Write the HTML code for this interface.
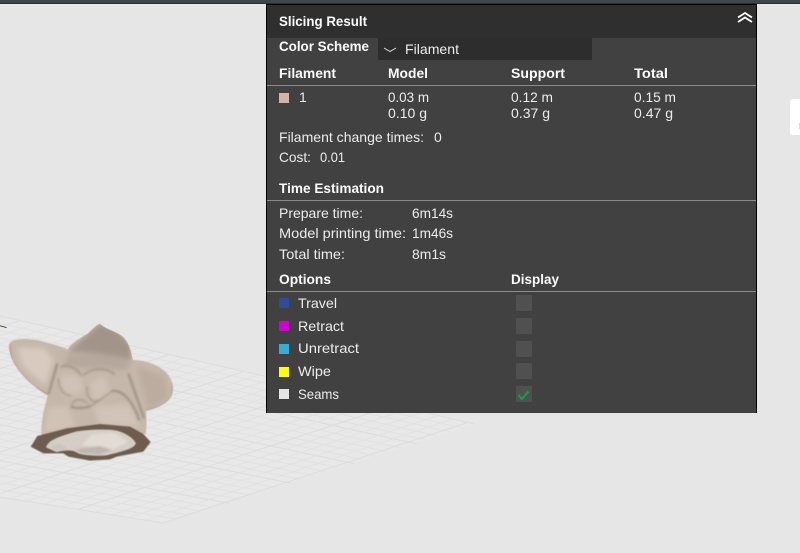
<!DOCTYPE html>
<html lang="en"><head><meta charset="utf-8"><title>Slicing Result</title>
<style>
html,body{margin:0;padding:0;width:800px;height:553px;overflow:hidden;background:#e6e6e6}
svg{display:block;position:absolute;left:0;top:0}
text{font-family:"Liberation Sans",sans-serif;font-size:14px;fill:#ececec}
.b{font-weight:bold;fill:#fbfbfb}
</style></head><body>
<svg width="800" height="553" viewBox="0 0 800 553" xmlns="http://www.w3.org/2000/svg">
<defs>
<filter id="b1" x="-20%" y="-20%" width="140%" height="140%"><feGaussianBlur stdDeviation="3.500"/></filter>
<filter id="b2" x="-30%" y="-30%" width="160%" height="160%"><feGaussianBlur stdDeviation="8"/></filter>
<filter id="b3" x="-5%" y="-5%" width="110%" height="110%"><feGaussianBlur stdDeviation="1.200"/></filter>
<clipPath id="sil"><path d="M28 100C40 85 80 82 130 95C160 103 185 110 203 118C212 100 240 85 262 72C280 55 295 40 300 42C320 60 345 62 368 80C388 100 395 130 398 150C430 150 465 160 490 180C510 195 522 220 518 245C515 270 490 290 438 303C440 330 440 350 437 372L125 385C122 330 132 300 143 256C110 238 70 205 45 165C30 140 25 115 28 100Z"/></clipPath>
</defs>
<rect width="800" height="553" fill="#e6e6e6"/>
<polygon points="0,316 475,424 163,523 0,497" fill="#e8e8e8"/>
<g id="grid" fill="none"></g>
<rect x="0" y="0" width="800" height="3" fill="#3e484c"/>
<rect x="0" y="3" width="800" height="1" fill="#2a2e30"/>

<!-- model -->
<g transform="translate(0 310) scale(.33333)">
<path d="M0 47L20 53" stroke="#5a4a42" stroke-width="3"/>
<path filter="url(#b3)" fill="#c6b7ab" d="M28 100C40 85 80 82 130 95C160 103 185 110 203 118C212 100 240 85 262 72C280 55 295 40 300 42C320 60 345 62 368 80C388 100 395 130 398 150C430 150 465 160 490 180C510 195 522 220 518 245C515 270 490 290 438 303C440 330 440 350 437 372L125 385C122 330 132 300 143 256C110 238 70 205 45 165C30 140 25 115 28 100Z"/>
<g clip-path="url(#sil)">
<g filter="url(#b2)">
<path fill="#a3948a" d="M205 125L260 75 300 40 350 60 390 100 395 150 300 130Z"/>
<path fill="#b6a79b" d="M205 135L300 130 395 155 380 180 190 170Z"/>
<path fill="#d8cabe" d="M50 112L135 115 160 150 135 225 70 170Z"/>
<path fill="#d1c3b7" d="M280 290L385 280 420 350 300 345Z"/>
<path fill="#d1c2b6" d="M145 290L205 290 225 350 130 370Z"/>
<path fill="#bbac9f" d="M410 170L495 200 505 265 445 295Z"/>
<path fill="#d0c2b6" d="M180 195L238 195 250 245 195 262Z"/>
<path fill="#d0c2b6" d="M268 215L318 200 330 250 285 278Z"/>
</g>
<g fill="none" filter="url(#b1)" stroke="#a49589">
<path stroke-width="5" d="M182 172C200 162 225 168 245 198"/>
<path stroke-width="5" d="M250 195C280 172 320 170 345 195"/>
<path stroke-width="4" d="M175 205C175 235 190 255 215 258"/>
<path stroke-width="4" d="M262 228C255 255 275 285 295 270"/>
<path stroke-width="4" d="M215 285C222 265 245 265 262 280"/>
<path stroke-width="5" stroke="#94857a" d="M212 290Q240 300 272 288"/>
<path stroke-width="5" stroke="#95867a" d="M335 243C372 238 402 282 418 332"/>
<path stroke-width="4" d="M272 288C290 280 310 260 335 245"/>
<path stroke-width="6" stroke="#9b8c81" d="M172 160L146 252"/>
<path stroke-width="6" stroke="#9b8c81" d="M385 190L432 325"/>
<path stroke-width="4" stroke="#a89a8e" d="M28 105L35 150 60 190 100 230 143 252"/>
<path stroke-width="3" stroke="#a89a8e" d="M438 300L490 285 516 262 518 220"/>
</g>
</g>
<path fill="#6e5b50" filter="url(#b3)" d="M92 410L100 398 112 378 200 355 300 342 390 350 430 372 452 396 430 425 350 440 330 448 270 452 205 440 190 430 130 430Z"/>
<path fill="#d6cdc6" filter="url(#b3)" d="M138 412C145 395 155 385 230 364C270 358 320 356 350 362C380 370 400 385 408 400C400 415 385 420 320 436C290 438 250 436 235 430C220 420 200 418 170 426Z"/>
<g filter="url(#b1)">
<path fill="#e2dbd4" d="M245 405L275 375 340 368 385 395 340 418Z"/>
<path fill="#bdb6b1" d="M225 418L300 408 335 420 300 433 245 430Z"/>
<path fill="#cbc5c0" d="M150 410L180 400 205 418 165 422Z"/>
</g>
</g>

<!-- right floating button -->
<rect x="790" y="99" width="20" height="36" rx="3" fill="#ffffff"/>
<rect x="799" y="123" width="1" height="6" fill="#bfe6cf"/>

<!-- panel -->
<rect x="266" y="4" width="491" height="409" fill="#000"/>
<rect x="267" y="5" width="489" height="408" fill="#414141"/>
<rect x="267" y="5" width="489" height="33" fill="#2f2f2f"/>
<rect x="378" y="38" width="214" height="22" fill="#2d2d2d"/>

<path d="M738 17.500L745 13 752 17.500M738 22L745 17.500 752 22" fill="none" stroke="#fff" stroke-width="1.800"/>
<path d="M384 48L390 51.500 396 48" fill="none" stroke="#dcdcdc" stroke-width="1"/>

<g fill="#8b8b8b">
<rect x="267" y="85" width="489" height="1"/>
<rect x="267" y="200" width="489" height="1"/>
<rect x="267" y="291" width="489" height="1"/>
</g>

<text class="b" x="279" y="26" textLength="88" lengthAdjust="spacingAndGlyphs">Slicing Result</text>
<text class="b" x="279" y="51" textLength="90" lengthAdjust="spacingAndGlyphs">Color Scheme</text>
<text x="405" y="54" textLength="54" lengthAdjust="spacingAndGlyphs">Filament</text>

<text class="b" x="279" y="78" textLength="57" lengthAdjust="spacingAndGlyphs">Filament</text>
<text class="b" x="388" y="78" textLength="40" lengthAdjust="spacingAndGlyphs">Model</text>
<text class="b" x="511" y="78" textLength="54" lengthAdjust="spacingAndGlyphs">Support</text>
<text class="b" x="634" y="78" textLength="34" lengthAdjust="spacingAndGlyphs">Total</text>

<rect x="279" y="93" width="10" height="10" fill="#d4b5a5"/>
<text x="299" y="102">1</text>
<text x="388" y="102" textLength="41" lengthAdjust="spacingAndGlyphs">0.03 m</text>
<text x="388" y="118" textLength="39" lengthAdjust="spacingAndGlyphs">0.10 g</text>
<text x="511" y="102" textLength="42" lengthAdjust="spacingAndGlyphs">0.12 m</text>
<text x="511" y="118" textLength="39" lengthAdjust="spacingAndGlyphs">0.37 g</text>
<text x="634" y="102" textLength="42" lengthAdjust="spacingAndGlyphs">0.15 m</text>
<text x="634" y="118" textLength="39" lengthAdjust="spacingAndGlyphs">0.47 g</text>

<text x="279" y="142" textLength="145" lengthAdjust="spacingAndGlyphs">Filament change times:</text>
<text x="434" y="142">0</text>
<text x="279" y="162" textLength="32" lengthAdjust="spacingAndGlyphs">Cost:</text>
<text x="320" y="162" textLength="25" lengthAdjust="spacingAndGlyphs">0.01</text>

<text class="b" x="279" y="193" textLength="105" lengthAdjust="spacingAndGlyphs">Time Estimation</text>
<text x="279" y="218" textLength="84" lengthAdjust="spacingAndGlyphs">Prepare time:</text>
<text x="412" y="218" textLength="41" lengthAdjust="spacingAndGlyphs">6m14s</text>
<text x="279" y="238" textLength="127" lengthAdjust="spacingAndGlyphs">Model printing time:</text>
<text x="412" y="238" textLength="41" lengthAdjust="spacingAndGlyphs">1m46s</text>
<text x="279" y="259" textLength="66" lengthAdjust="spacingAndGlyphs">Total time:</text>
<text x="412" y="259" textLength="34" lengthAdjust="spacingAndGlyphs">8m1s</text>

<text class="b" x="279" y="284" textLength="52" lengthAdjust="spacingAndGlyphs">Options</text>
<text class="b" x="511" y="284" textLength="48" lengthAdjust="spacingAndGlyphs">Display</text>

<rect x="279" y="298" width="10" height="10" fill="#2f4a9f"/>
<rect x="279" y="321" width="10" height="10" fill="#d000d0"/>
<rect x="279" y="344" width="10" height="10" fill="#2fb0d4"/>
<rect x="279" y="367" width="10" height="10" fill="#ffff00"/>
<rect x="279" y="389" width="10" height="10" fill="#e6e6e6"/>

<text x="298" y="308" textLength="39" lengthAdjust="spacingAndGlyphs">Travel</text>
<text x="298" y="331" textLength="46" lengthAdjust="spacingAndGlyphs">Retract</text>
<text x="298" y="353" textLength="61" lengthAdjust="spacingAndGlyphs">Unretract</text>
<text x="298" y="376" textLength="33" lengthAdjust="spacingAndGlyphs">Wipe</text>
<text x="298" y="399" textLength="41" lengthAdjust="spacingAndGlyphs">Seams</text>

<g fill="#505050">
<rect x="516" y="295" width="16" height="16"/>
<rect x="516" y="318" width="16" height="16"/>
<rect x="516" y="341" width="16" height="16"/>
<rect x="516" y="363" width="16" height="16"/>
<rect x="516" y="386" width="16" height="16"/>
</g>
<path d="M518.500 395L522 399 528.500 391.500" fill="none" stroke="#0ba84a" stroke-width="2"/>
</svg>
<script>
(function(){
var g=document.getElementById('grid'),s='';
var R=[475,424],F=[163,523];
function ln(a,b,c,d,col,w){s+='<line x1="'+a.toFixed(1)+'" y1="'+b.toFixed(1)+'" x2="'+c.toFixed(1)+'" y2="'+d.toFixed(1)+'" stroke="'+col+'" stroke-width="'+w+'"/>';}
var i;
for(i=0;i<=25;i++){
 var t=i/25,ex=R[0]+(F[0]-R[0])*t,ey=R[1]+(F[1]-R[1])*t;
 var y0=316+t*181;
 var maj=i%5==0;
 ln(0,y0,ex+(maj&&i>0&&i<25?4:0),ey,maj?'#dcdcdc':'#e1e1e1',1);
}
for(i=-40;i<=0;i++){
 var x=163+i*17;
 var y=497+x*(26/163);
 var m=-.33,bk=.2274,yb0=316;
 var xe=(y-m*x-yb0)/(bk-m),ye=yb0+bk*xe;
 if(xe>475){xe=475;ye=424;}
 var maj2=i%5==0;
 ln(x,y,xe,ye,maj2?'#dcdcdc':'#e1e1e1',1);
}
g.innerHTML=s;
})();
</script>
</body></html>
